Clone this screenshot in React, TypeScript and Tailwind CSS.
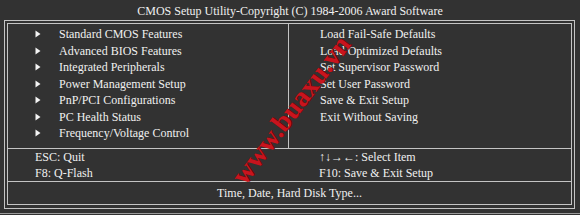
const leftItems = [
  'Standard CMOS Features',
  'Advanced BIOS Features',
  'Integrated Peripherals',
  'Power Management Setup',
  'PnP/PCI Configurations',
  'PC Health Status',
  'Frequency/Voltage Control',
]

const rightItems = [
  'Load Fail-Safe Defaults',
  'Load Optimized Defaults',
  'Set Supervisor Password',
  'Set User Password',
  'Save & Exit Setup',
  'Exit Without Saving',
]

function Arrow() {
  return (
    <svg width="6" height="8" viewBox="0 0 6 8" className="shrink-0">
      <path d="M0.5 0.5 L5.5 4 L0.5 7.5 Z" fill="#f4f4f4" />
    </svg>
  )
}

export default function App() {
  return (
    <div
      className="relative h-[215px] w-[580px] overflow-hidden bg-[#323232] text-[12px] text-[#f0f0f0]"
      style={{ fontFamily: '"Liberation Serif", "DejaVu Serif", serif' }}
    >
      <div className="flex h-[20px] items-center justify-center pt-px">
        CMOS Setup Utility-Copyright (C) 1984-2006 Award Software
      </div>

      <div className="ml-[4px] w-[571px] border border-[#c4c4c4] p-[2px] pb-[3px]">
        <div className="border border-[#c4c4c4]">
          <div className="grid h-[125px] grid-cols-[281px_1fr] border-b border-[#c4c4c4]">
            <div className="border-r border-[#c4c4c4] pt-[2px] pl-[27px]">
              {leftItems.map((item) => (
                <div key={item} className="flex h-[16.5px] items-center">
                  <Arrow />
                  <span className="ml-[18px]">{item}</span>
                </div>
              ))}
            </div>
            <div className="pt-[2px] pl-[31px]">
              {rightItems.map((item) => (
                <div key={item} className="flex h-[16.5px] items-center">
                  {item}
                </div>
              ))}
            </div>
          </div>

          <div className="grid h-[33px] grid-cols-[281px_1fr] border-b border-[#c4c4c4]">
            <div className="pl-[27px]">
              <div className="flex h-[16px] items-center">ESC: Quit</div>
              <div className="flex h-[16px] items-center">F8: Q-Flash</div>
            </div>
            <div className="pl-[30px]">
              <div className="flex h-[16px] items-center">↑↓→←: Select Item</div>
              <div className="flex h-[16px] items-center">F10: Save &amp; Exit Setup</div>
            </div>
          </div>

          <div className="flex h-[22px] items-center justify-center">
            Time, Date, Hard Disk Type...
          </div>
        </div>
      </div>

      <div className="mt-[4px] h-px w-full bg-[#9a9a9a]" />

      <span
        className="absolute top-[110px] left-[291px] -translate-x-1/2 -translate-y-1/2 rotate-[-53deg] text-[28px] font-bold whitespace-nowrap text-[#c8141e]"
        style={{ fontFamily: '"Liberation Serif", serif', textShadow: '1px 1px 0 #5a0a0a' }}
      >
        www.buaxu.vn
      </span>
    </div>
  )
}
